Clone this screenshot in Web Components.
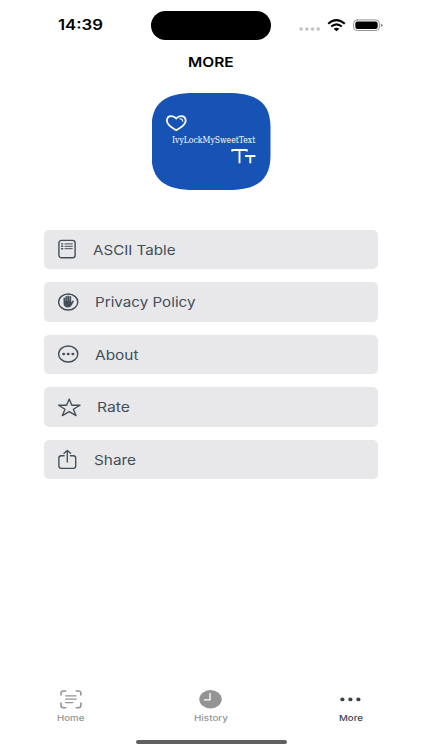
<!DOCTYPE html>
<html lang="en"><head><meta charset="utf-8"><title>More</title>
<style>html,body{margin:0;height:100%;background:#fff}body{font-family:Inter,"Liberation Sans",sans-serif}</style></head>
<body><more-screen></more-screen>
<script>
const define=(name,html,init)=>customElements.define(name,class extends HTMLElement{
  constructor(){super();this.attachShadow({mode:'open'});}
  connectedCallback(){this.shadowRoot.innerHTML=html;if(init)init.call(this,this.shadowRoot);}
});

// A single line of text fitted to a given width; attributes: w, size, weight, label.
define('fit-text',`<style>:host{display:block;flex:none}svg{display:block;overflow:visible}text{fill:currentColor}</style><svg><text lengthAdjust="spacingAndGlyphs"></text></svg>`,function(r){
  const w=+this.getAttribute('w'),s=+this.getAttribute('size'),svg=r.querySelector('svg'),t=r.querySelector('text');
  svg.setAttribute('width',w);svg.setAttribute('height',s);
  t.setAttribute('y',s*.86);t.setAttribute('textLength',w);
  t.style.fontSize=s+'px';t.style.fontWeight=this.getAttribute('weight')||400;
  t.textContent=this.getAttribute('label');
});

const icons={
 ascii:[18,20,`<rect x=".9" y="1.4" width="16.2" height="17.4" rx="2.6" stroke-width="1.4"/><path d="M6.9 4.9h7.4M6.9 7.3h7.4M6.9 9.7h7.4" stroke-width="1"/><path d="M3.6 4.9h1.1M3.6 7.3h1.1M3.6 9.7h1.1" stroke-width="1.4"/>`],
 privacy:[21,18,`<ellipse cx="10.2" cy="9" rx="9.6" ry="8" stroke-width="1.4"/><path fill="currentColor" stroke="none" d="M5.5 9.8V5q.8-1 1.6 0v3h.3V3.6q.9-1 1.7 0v4.2h.3V2.9q.9-1 1.8 0v4.9h.3V3.6q.9-1 1.7 0v5.9l1.2-1.7q1-.8 1.6.2l-2.1 3.9q-1.3 2.6-4 2.6-4.4 0-4.4-4.7z"/>`],
 about:[21,18,`<ellipse cx="10.2" cy="9" rx="9.6" ry="8" stroke-width="1.4"/><g fill="currentColor" stroke="none"><ellipse cx="5.6" cy="9" rx="1.5" ry="1.25"/><ellipse cx="10.2" cy="9" rx="1.5" ry="1.25"/><ellipse cx="14.9" cy="9" rx="1.5" ry="1.25"/></g>`],
 rate:[23,19,`<path stroke-width="1.35" d="M11.2 1.1l2.6 6.1h8.2l-6.6 4.1 2.6 6.3-6.8-3.9-6.8 3.9L7 11.3.6 7.2h8z"/>`],
 share:[19,21,`<path stroke-width="1.35" d="M6.2 6.7H3.3Q.9 6.7.9 8.9v8.2q0 2.2 2.4 2.2h12q2.4 0 2.4-2.2V8.9q0-2.2-2.4-2.2h-2.9M9.3 13V1.5M6 4.3l3.3-2.9 3.3 2.9"/>`],
 home:[22,19,`<path stroke-width="1.6" d="M1 5V3.2Q1 1 3.4 1h2.3M16.2 1h2.2q2.5 0 2.5 2.2V5M1 13v2.5q0 2.2 2.4 2.2h2.3M16.2 17.7h2.2q2.5 0 2.5-2.2V13"/><path stroke-width="1.3" d="M5.6 5.8h10.5M5.6 9.2h10.5M5.6 12.6h7.2"/>`],
 history:[23,19,`<ellipse cx="11.5" cy="9.3" rx="11.2" ry="9.2" fill="currentColor" stroke="none"/><path stroke="#fff" stroke-width="1.3" d="M11 3.4v6.5H5.5"/>`],
 more:[22,19,`<g fill="currentColor" stroke="none"><ellipse cx="2.4" cy="9.4" rx="2.1" ry="1.9"/><ellipse cx="10.4" cy="9.4" rx="2.1" ry="1.9"/><ellipse cx="18.4" cy="9.4" rx="2.1" ry="1.9"/></g>`],
 signal:[23,15,`<g fill="#c4c4c4" stroke="none"><circle cx="3.1" cy="11.1" r="1.8"/><circle cx="8.8" cy="11.1" r="1.8"/><circle cx="14.5" cy="11.1" r="1.8"/><circle cx="20.2" cy="11.1" r="1.8"/></g>`],
 wifi:[20,15,`<g stroke-width="2" stroke-linecap="butt"><path d="M1.2 5.7q8-7.2 16.6 0M4.2 8.6q5.3-4.5 10.6 0"/></g><path fill="currentColor" stroke="none" d="M6.6 10.8q2.9-2.1 5.8 0L9.5 13.3z"/>`],
 battery:[30,15,`<rect x=".6" y="1.9" width="25.8" height="10.6" rx="3.6" stroke="#929292" stroke-width="1"/><rect x="2.3" y="3.4" width="22.4" height="7.6" rx="2.3" fill="currentColor" stroke="none"/><path fill="#929292" stroke="none" d="M27.8 5.5q1.9.4 1.9 1.8t-1.9 1.8z"/>`],
 heart:[22,17,`<path stroke-width="1.8" d="M10.2 15.2Q.9 10 .9 5.7 1.1 1.1 5.3 1.1q3 0 4.9 2.4 1.9-2.4 4.9-2.4 4.4 0 4.6 4.6 0 4.3-9.5 9.5z"/><path stroke-width="1.1" d="M13.9 3.7q2.8 0 2.8 2.6"/>`],
 size:[25,17,`<path stroke-width="1.9" stroke-linecap="butt" stroke-linejoin="round" d="M1.2 3.4V2h14.6v1.4M8.5 2v13.2M14.9 9.1V8h8.7v1.1M19.3 8v7.2"/>`]
};
define('ui-icon',`<style>:host{display:block;flex:none}svg{display:block;fill:none;stroke:currentColor;stroke-linecap:round;stroke-linejoin:round}</style>`,function(r){
  const [w,h,p]=icons[this.getAttribute('name')];
  r.innerHTML+=`<svg width="${w}" height="${h}" viewBox="0 0 ${w} ${h}">${p}</svg>`;
});

define('status-bar',`<style>:host{display:grid;grid-template-columns:151px 120px 1fr;height:51px;padding-top:11px;box-sizing:border-box;color:#000}
.time{padding:7px 0 0 57.5px}.island{height:29px;border-radius:14.5px;background:#000}.right{display:flex;padding:6.5px 0 0 27px}.wifi{margin-left:5.5px}.bat{margin-left:6px}</style>
<div class="time"><fit-text w="45" size="14.5" weight="600" label="14:39"></fit-text></div><div class="island"></div>
<div class="right"><ui-icon name="signal"></ui-icon><ui-icon class="wifi" name="wifi"></ui-icon><ui-icon class="bat" name="battery"></ui-icon></div>`);

define('app-logo',`<style>:host{display:flex;flex-direction:column;box-sizing:border-box;width:119px;height:97px;padding:22px 15px 0 14px;background:#1753b5;color:#fff;clip-path:path("M0 35C0 10 13 0 43 0H76C106 0 119 10 119 35V62C119 87 106 97 76 97H43C13 97 0 87 0 62Z")}
fit-text{font-family:"DejaVu Serif Condensed","DejaVu Serif",serif;margin:4px 0 0 6px}.size{margin:4px 0 0 65px}</style>
<ui-icon name="heart"></ui-icon><fit-text w="83.3" size="8.3" label="IvyLockMySweetText"></fit-text><ui-icon class="size" name="size"></ui-icon>`);

define('menu-row',`<style>:host{display:flex;align-items:center;box-sizing:border-box;height:39.8px;padding-left:13.5px;border-radius:5px;background:#e8e8eb;color:#434e59}
fit-text{margin-left:var(--gap,17px)}</style>`,function(r){
  const a=n=>this.getAttribute(n);
  r.innerHTML+=`<ui-icon name="${a('icon')}"></ui-icon><fit-text w="${a('w')}" size="13.4" label="${a('label')}"></fit-text>`;
});

define('tab-item',`<style>:host{display:flex;flex-direction:column;align-items:center;gap:5px;color:#949494}:host([active]){color:#3b434f}</style>`,function(r){
  const a=n=>this.getAttribute(n);
  r.innerHTML+=`<ui-icon name="${a('icon')}"></ui-icon><fit-text w="${a('w')}" size="7.9" weight="500" label="${a('label')}"></fit-text>`;
});

define('more-screen',`<style>:host{display:flex;flex-direction:column;width:422px;height:750px;background:#fff;overflow:hidden}
.title{display:flex;justify-content:center;height:42px;padding-top:4px;box-sizing:border-box;color:#000}
app-logo{align-self:center}.menu{display:grid;gap:12.75px;margin:39.5px 44.2px 0}
nav{display:grid;grid-template-columns:repeat(3,140.3px);padding-left:.4px;margin-top:auto;height:49.5px}.bar{align-self:center;width:151px;height:4px;border-radius:2px;background:#606060;margin-bottom:6.5px}</style>
<status-bar></status-bar><div class="title"><fit-text w="45.6" size="13.4" weight="600" label="MORE"></fit-text></div><app-logo></app-logo>
<div class="menu">
<menu-row icon="ascii" w="82.5" label="ASCII Table"></menu-row><menu-row icon="privacy" w="100.5" label="Privacy Policy" style="--gap:16.3px"></menu-row><menu-row icon="about" w="43.5" label="About" style="--gap:16.5px"></menu-row><menu-row icon="rate" w="33" label="Rate" style="--gap:16.5px"></menu-row><menu-row icon="share" w="42" label="Share"></menu-row></div>
<nav><tab-item icon="home" w="27.5" label="Home"></tab-item><tab-item icon="history" w="34" label="History"></tab-item><tab-item active icon="more" w="24" label="More"></tab-item></nav><div class="bar"></div>`);
</script></body></html>
